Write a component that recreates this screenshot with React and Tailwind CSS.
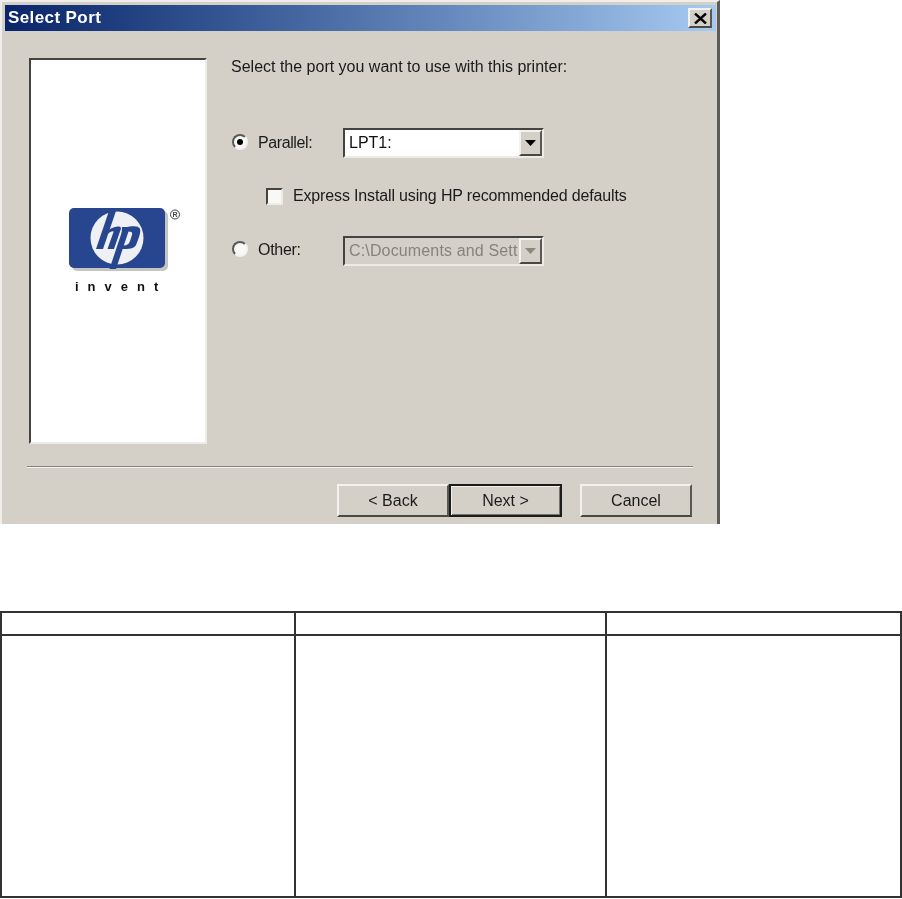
const FONT = "font-['Liberation_Sans',Arial,sans-serif]"

const RAISED = 'border-2 border-t-[#f4f2ee] border-l-[#f4f2ee] border-r-[#5a5852] border-b-[#4a4842]'
const SUNKEN = 'border-2 border-t-[#45433f] border-l-[#45433f] border-r-[#ecebe6] border-b-[#ecebe6]'

function Radio({ checked, className = '' }) {
  return (
    <span className={`ml-[1px] flex h-4 w-4 shrink-0 items-center justify-center rounded-full border-2 border-t-[#5c5a55] border-l-[#5c5a55] border-r-[#f4f2ee] border-b-[#f4f2ee] bg-[#f8f8f6] ${className}`}>
      {checked && <span className="h-[6px] w-[6px] rounded-full bg-black" />}
    </span>
  )
}

function ComboArrow({ disabled }) {
  return (
    <span className={`flex h-full w-[23px] items-center justify-center bg-[#d4d0c8] ${RAISED}`}>
      <svg width="11" height="6" viewBox="0 0 11 6">
        <path d="M0 0h11L5.5 6z" fill={disabled ? '#8a8882' : '#000'} />
      </svg>
    </span>
  )
}

function Combo({ value, disabled }) {
  return (
    <div className={`flex h-[30px] w-[201px] items-stretch ${SUNKEN} ${disabled ? 'bg-[#d4d0c8] tracking-[0.15px] text-[#85837d]' : 'bg-white text-[#111]'}`}>
      <span className="flex-1 whitespace-nowrap pl-[4px] leading-[26px]">{value}</span>
      <ComboArrow disabled={disabled} />
    </div>
  )
}

function WizardButton({ label, isDefault, width }) {
  return (
    <button className={`h-[33px] bg-[#d4d0c8] text-[16px] text-[#1a1a1a] ${width} ${isDefault ? 'border-2 border-[#1c1c1a] shadow-[inset_1px_1px_0_#f4f2ee,inset_-1px_-1px_0_#77756f]' : RAISED}`}>
      {label}
    </button>
  )
}

function HpLogo() {
  return (
    <div className="flex w-[130px] flex-col items-start">
      <svg className="ml-[16px]" width="114" height="64" viewBox="0 0 114 64">
        <rect x="3" y="3" width="96" height="60" rx="5" fill="#c4c4c2" />
        <rect x="0" y="0" width="96" height="60" rx="5" fill="#27468f" />
        <circle cx="48" cy="30" r="26.5" fill="#eef0f3" />
        {/* hp monogram */}
        <path d="M41 0L48 0L34 41L27 41z" fill="#27468f" />
        <path d="M36 25C40 21 45 18.500 49 18.500C52 18.500 52.500 20 51.500 22L45 41L38.500 41L44.500 24C45 22.500 41 23 37 28z" fill="#27468f" />
        <path d="M54.500 19L61 19L47 61L40.500 61z" fill="#27468f" />
        <path
          fillRule="evenodd"
          d="M58 19C62 18 70 17.500 71 21C72 24 70 29 69 32L67 37C65 41 60 41 52 41L53 19zM57.500 23.500L52.500 37.500C58 38 60 36 61 33L63 27C64 24 62 23 57.500 23.500z"
          fill="#27468f"
        />
        <circle cx="106" cy="6.500" r="4.500" fill="none" stroke="#444" strokeWidth="1" />
        <text x="106" y="9" fontSize="7" fontWeight="700" textAnchor="middle" fill="#444" fontFamily="Liberation Sans, Arial, sans-serif">R</text>
      </svg>
      <div className="mt-[8px] pl-[22px] text-[13px] leading-[14px] font-bold tracking-[9px] whitespace-nowrap text-[#111]">invent</div>
    </div>
  )
}

export default function App() {
  return (
    <div className={`h-[899px] w-[902px] overflow-hidden bg-white ${FONT}`}>
      <div className="flex h-[524px] w-[720px] flex-col border-t-2 border-l-2 border-r-[3px] border-t-[#efeeea] border-l-[#efeeea] border-r-[#5e5c58] bg-[#d4d0c8] pt-[3px] pr-[1px] pl-[3px] blur-[0.4px]">
        <div className="flex h-[26px] shrink-0 items-center justify-between bg-gradient-to-r from-[#0a246a] to-[#a6caf0] pr-[4px] pl-[3px]">
          <span className="text-[17px] font-bold tracking-[0.4px] text-white">Select Port</span>
          <span className={`flex h-[20px] w-[24px] items-center justify-center bg-[#d4d0c8] ${RAISED}`}>
            <svg width="13" height="11" viewBox="0 0 13 11">
              <path d="M1 0.5L12 10.5M12 0.5L1 10.5" stroke="#000" strokeWidth="2.4" />
            </svg>
          </span>
        </div>

        <div className="flex pt-[27px] pl-[24px]">
          <div className={`flex h-[386px] w-[178px] shrink-0 items-center justify-center bg-white ${SUNKEN}`}>
            <HpLogo />
          </div>

          <div className="ml-[24px] text-[16px] text-[#1a1a1a]">
            <div className="leading-[18px]">Select the port you want to use with this printer:</div>

            <div className="mt-[52px] flex items-center">
              <Radio checked className="mb-[2px]" />
              <span className="ml-[10px] w-[85px] tracking-[-0.4px]">Parallel:</span>
              <Combo value="LPT1:" />
            </div>

            <label className="mt-[26px] ml-[35px] flex items-center">
              <span className={`h-[17px] w-[17px] bg-[#f8f8f6] ${SUNKEN}`} />
              <span className="ml-[10px] tracking-[-0.15px] whitespace-nowrap">Express Install using HP recommended defaults</span>
            </label>

            <div className="mt-[28px] flex items-center">
              <Radio className="mb-[4px]" />
              <span className="mb-[2px] ml-[10px] w-[85px] tracking-[-0.3px]">Other:</span>
              <Combo value="C:\Documents and Sett" disabled />
            </div>
          </div>
        </div>

        <div className="mt-[22px] mr-[23px] ml-[22px] h-[2px] border-t border-b border-t-[#85837d] border-b-[#f4f2ee]" />

        <div className="mt-[16px] flex justify-end pr-[24px]">
          <WizardButton label="< Back" width="w-[112px]" />
          <WizardButton label="Next >" width="w-[113px]" isDefault />
          <div className="ml-[18px]">
            <WizardButton label="Cancel" width="w-[112px]" />
          </div>
        </div>
      </div>

      <table className="mt-[87px] h-[287px] w-[902px] table-fixed border-collapse">
        <colgroup>
          <col className="w-[294px]" />
          <col className="w-[311px]" />
          <col />
        </colgroup>
        <tbody>
          <tr className="h-[23px]">
            <td className="border-2 border-[#333]" />
            <td className="border-2 border-[#333]" />
            <td className="border-2 border-[#333]" />
          </tr>
          <tr>
            <td className="border-2 border-[#333]" />
            <td className="border-2 border-[#333]" />
            <td className="border-2 border-[#333]" />
          </tr>
        </tbody>
      </table>
    </div>
  )
}
